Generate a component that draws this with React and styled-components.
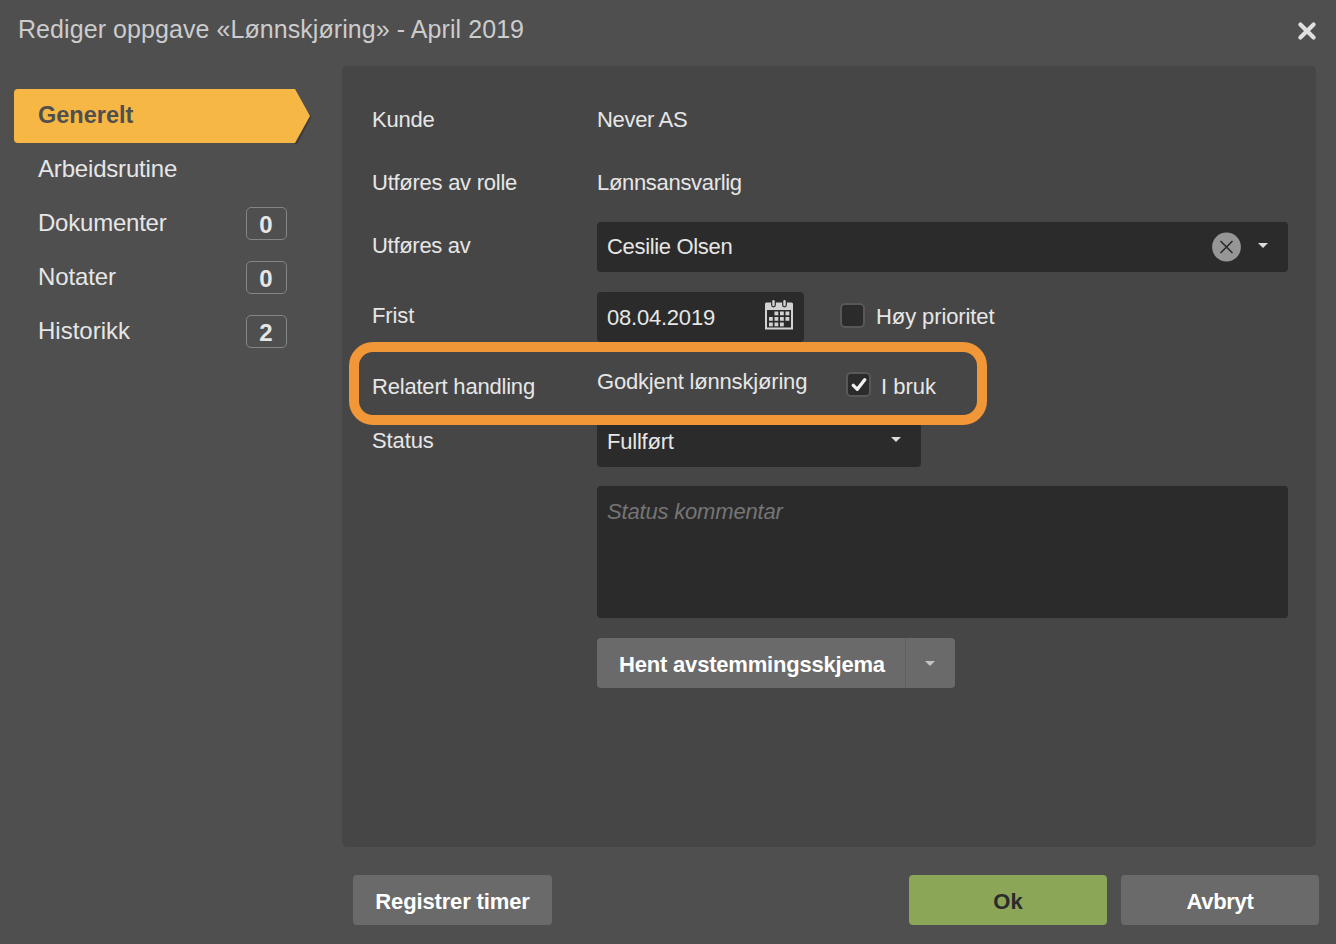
import React from "react";
import styled, { createGlobalStyle } from "styled-components";

const Global = createGlobalStyle`
  *, *::before, *::after { box-sizing: border-box; }
  body { margin: 0; background: #4f4f4f; }
  button, input, textarea { font: inherit; }
`;

const Dialog = styled.div`
  display: flex;
  flex-direction: column;
  width: 1336px;
  height: 944px;
  overflow: hidden;
  background: #4f4f4f;
  color: #e6e6e6;
  font-family: "Liberation Sans", Arial, sans-serif;
  font-size: 22px;
  line-height: 26px;
`;

const Header = styled.header`
  display: flex;
  justify-content: space-between;
  height: 66px;
  padding: 14px 19px 0 18px;
`;

const Title = styled.h1`
  margin: 0;
  font-size: 25px;
  font-weight: 400;
  line-height: 30px;
  letter-spacing: 0.07px;
  color: #cccccc;
  white-space: nowrap;
`;

const CloseButton = styled.button`
  display: block;
  width: 20px;
  height: 20px;
  margin-top: 7px;
  padding: 0;
  border: 0;
  background: none;
  svg { display: block; }
`;

const Body = styled.div`
  display: flex;
  height: 781px;
`;

const Sidebar = styled.nav`
  width: 342px;
  padding: 23px 0 0 14px;
`;

const NavItem = styled.a`
  position: relative;
  display: flex;
  justify-content: space-between;
  align-items: center;
  width: 281px;
  height: 54px;
  padding: 0 8px 0 24px;
  border-radius: 4px 0 0 4px;
  font-size: ${(p) => (p.$active ? 23.5 : 24)}px;
  letter-spacing: ${(p) => p.$spacing || 0}px;
  font-weight: ${(p) => (p.$active ? 700 : 400)};
  color: ${(p) => (p.$active ? "#4f4f4f" : "#e6e6e6")};
  background: ${(p) => (p.$active ? "#f6b744" : "transparent")};
`;

const NavLabel = styled.span`
  margin-top: -3px;
`;

const Arrow = styled.svg`
  position: absolute;
  left: 280px;
  top: 0;
`;

const Badge = styled.span`
  width: 41px;
  height: 33px;
  margin-top: -1px;
  border: 1px solid #858585;
  border-radius: 5px;
  font-weight: 700;
  line-height: 34px;
  text-align: center;
  text-indent: -1px;
  letter-spacing: 0;
`;

const Panel = styled.main`
  width: 974px;
  padding: 22px 28px 0 30px;
  border-radius: 5px;
  background: #464646;
`;

const Row = styled.div`
  display: flex;
  position: relative;
  height: ${(p) => p.$h}px;
  margin-top: ${(p) => p.$gap || 0}px;
`;

const Label = styled.div`
  width: 225px;
  flex: none;
  padding-top: ${(p) => p.$top}px;
  letter-spacing: ${(p) => p.$spacing || 0}px;
  white-space: nowrap;
`;

const Value = styled.div`
  padding-top: ${(p) => p.$top}px;
  width: ${(p) => (p.$w ? p.$w + "px" : "auto")};
  letter-spacing: ${(p) => p.$spacing || 0}px;
  white-space: nowrap;
`;

const Field = styled.div`
  display: flex;
  justify-content: space-between;
  width: ${(p) => p.$w}px;
  height: 50px;
  padding: ${(p) => p.$top || 12}px ${(p) => p.$right}px 0 10px;
  border-radius: 4px;
  background: #2b2b2b;
  letter-spacing: ${(p) => p.$spacing || 0}px;
`;

const FieldIcons = styled.div`
  display: flex;
  gap: 17px;
  margin-top: ${(p) => p.$top || -2}px;
`;

const Caret = styled.span`
  width: 0;
  height: 0;
  margin-top: ${(p) => p.$top || 0}px;
  border: 5px solid transparent;
  border-top-color: ${(p) => p.$color || "#dcdcdc"};
  border-bottom: 0;
`;

const Check = styled.span`
  display: flex;
  align-items: center;
  justify-content: center;
  width: 25px;
  height: 25px;
  margin: ${(p) => p.$m};
  border: 2px solid #585858;
  border-radius: 5px;
  background: #2b2b2b;
`;

const Highlight = styled.div`
  position: absolute;
  z-index: 2;
  left: -23px;
  top: 0;
  width: 638px;
  height: 83px;
  border: 10px solid #f19737;
  border-radius: 24px;
`;

const Comment = styled.textarea`
  display: block;
  width: 691px;
  height: 132px;
  margin: 19px 0 0 225px;
  padding: 13px 10px;
  border: 0;
  border-radius: 4px;
  resize: none;
  background: #2b2b2b;
  color: #e6e6e6;
  &::placeholder {
    color: #757575;
    font-style: italic;
    letter-spacing: -0.18px;
  }
`;

const SplitButton = styled.div`
  display: flex;
  width: 358px;
  height: 50px;
  margin: 20px 0 0 225px;
  border-radius: 4px;
  overflow: hidden;
  background: #6a6a6a;
`;

const SplitMain = styled.button`
  width: 309px;
  padding: 3px 0 0 2px;
  border: 0;
  border-right: 1px solid #5f5f5f;
  background: none;
  color: #fff;
  font-weight: 700;
  letter-spacing: -0.2px;
  white-space: nowrap;
`;

const SplitToggle = styled.button`
  display: flex;
  justify-content: center;
  width: 49px;
  padding: 23px 1px 0 0;
  border: 0;
  background: none;
`;

const Footer = styled.footer`
  display: flex;
  gap: 14px;
  padding: 28px 17px 0 353px;
`;

const Button = styled.button`
  width: ${(p) => p.$w || 198}px;
  height: 50px;
  padding: 3px 0 0;
  border: 0;
  border-radius: 4px;
  background: ${(p) => (p.$primary ? "#8ca658" : "#6a6a6a")};
  color: ${(p) => (p.$primary ? "#2b2b2b" : "#fff")};
  font-weight: 700;
  letter-spacing: ${(p) => p.$spacing || 0}px;
  margin-right: ${(p) => (p.$first ? "auto" : "0")};
`;

const CloseIcon = () => (
  <svg width="20" height="20" viewBox="0 0 20 20">
    <path d="M3.4 3.4 16.6 16.6M16.6 3.4 3.4 16.6" stroke="#e0e0e0" strokeWidth="4.2" strokeLinecap="round" />
  </svg>
);

const ClearIcon = () => (
  <svg width="29" height="30" viewBox="0 0 29 30">
    <circle cx="14.5" cy="15" r="14.4" fill="#969696" />
    <path d="M8.500 9 20.500 21M20.500 9 8.500 21" stroke="#2b2b2b" strokeWidth="1.600" />
  </svg>
);

const dots = [
  [1, 0], [2, 0], [3, 0],
  [0, 1], [1, 1], [2, 1], [3, 1],
  [0, 2], [1, 2], [2, 2],
];

const CalendarIcon = () => (
  <svg width="28" height="30" viewBox="0 0 28 30">
    <path d="M1.500 2.500h25A1.500 1.500 0 0 1 28 4V29.500H0V4a1.500 1.500 0 0 1 1.500-1.500Z" fill="#d2d2d2" />
    <rect x="2" y="10" width="24" height="17.500" fill="#2b2b2b" />
    {[8.5, 19.5].map((x) => (
      <g key={x}>
        <rect x={x - 2.4} y="0" width="4.800" height="7.500" rx="2.400" fill="#2b2b2b" />
        <rect x={x - 1.2} y="0" width="2.400" height="6.200" rx="1.200" fill="#d2d2d2" />
      </g>
    ))}
    {dots.map(([c, r]) => (
      <rect key={c + "-" + r} x={4 + c * 5.5} y={11.5 + r * 5.5} width="3.800" height="3.800" fill="#d2d2d2" />
    ))}
  </svg>
);

const CheckMark = () => (
  <svg width="16" height="14" viewBox="0 0 16 14">
    <path d="M2.300 7.300 6.300 11.300 13.700 1.800" fill="none" stroke="#f0f0f0" strokeWidth="3.300" strokeLinecap="round" strokeLinejoin="round" />
  </svg>
);

export default function App() {
  return (
    <Dialog>
      <Global />
      <Header>
        <Title>Rediger oppgave «Lønnskjøring» - April 2019</Title>
        <CloseButton aria-label="Lukk"><CloseIcon /></CloseButton>
      </Header>
      <Body>
        <Sidebar>
          <NavItem $active>
            <NavLabel>Generelt</NavLabel>
            <Arrow width="18" height="56" viewBox="0 0 18 56">
              <path d="M2.500 56 17.500 28 15 24 0 54Z" fill="#3c3c3c" />
              <path d="M0 0H1L16 27 1 54H0Z" fill="#f6b744" />
            </Arrow>
          </NavItem>
          <NavItem $spacing={-0.18}><NavLabel>Arbeidsrutine</NavLabel></NavItem>
          <NavItem $spacing={-0.22}><NavLabel>Dokumenter</NavLabel><Badge>0</Badge></NavItem>
          <NavItem $spacing={-0.1}><NavLabel>Notater</NavLabel><Badge>0</Badge></NavItem>
          <NavItem><NavLabel>Historikk</NavLabel><Badge>2</Badge></NavItem>
        </Sidebar>
        <Panel>
          <Row $h={63}>
            <Label $top={19} $spacing={-0.2}>Kunde</Label>
            <Value $top={19} $spacing={-0.33}>Never AS</Value>
          </Row>
          <Row $h={63}>
            <Label $top={19} $spacing={-0.26}>Utføres av rolle</Label>
            <Value $top={19} $spacing={-0.32}>Lønnsansvarlig</Value>
          </Row>
          <Row $h={50} $gap={8}>
            <Label $top={11} $spacing={-0.3}>Utføres av</Label>
            <Field $w={691} $right={20} $spacing={-0.33}>
              <span>Cesilie Olsen</span>
              <FieldIcons><ClearIcon /><Caret $top={11} /></FieldIcons>
            </Field>
          </Row>
          <Row $h={50} $gap={20}>
            <Label $top={11} $spacing={-0.1}>Frist</Label>
            <Field $w={207} $right={11} $top={13} $spacing={-0.22}>
              <span>08.04.2019</span>
              <FieldIcons $top={-5}><CalendarIcon /></FieldIcons>
            </Field>
            <Check $m="11px 11px 0 36px" />
            <Value $top={12} $spacing={-0.1}>Høy prioritet</Value>
          </Row>
          <Row $h={75}>
            <Highlight />
            <Label $top={32} $spacing={-0.2}>Relatert handling</Label>
            <Value $top={27} $w={249} $spacing={-0.18}>Godkjent lønnskjøring</Value>
            <Check $m="30px 10px 0 0"><CheckMark /></Check>
            <Value $top={32}>I bruk</Value>
          </Row>
          <Row $h={50}>
            <Label $top={11} $spacing={-0.1}>Status</Label>
            <Field $w={324} $right={20} $spacing={-0.22}>
              <span>Fullført</span>
              <Caret $top={8} />
            </Field>
          </Row>
          <Comment placeholder="Status kommentar" />
          <SplitButton>
            <SplitMain>Hent avstemmingsskjema</SplitMain>
            <SplitToggle aria-label="Flere valg"><Caret $color="#c4c4c4" /></SplitToggle>
          </SplitButton>
        </Panel>
      </Body>
      <Footer>
        <Button $w={199} $first $spacing={-0.14}>Registrer timer</Button>
        <Button $primary>Ok</Button>
        <Button $spacing={-0.3}>Avbryt</Button>
      </Footer>
    </Dialog>
  );
}
